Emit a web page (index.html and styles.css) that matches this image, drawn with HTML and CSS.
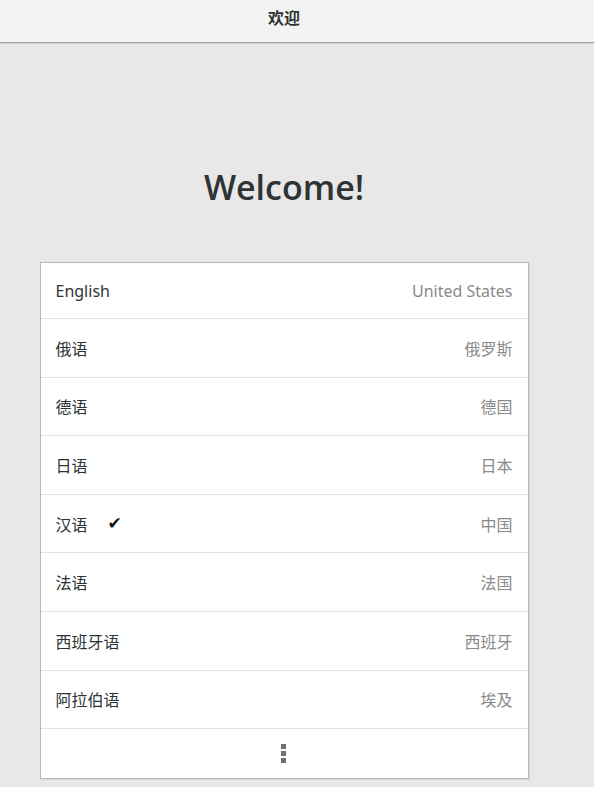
FILE: index.html
```html
<!DOCTYPE html>
<html lang="zh">
<head>
<meta charset="utf-8">
<link rel="stylesheet" href="styles.css">
</head>
<body>
<header class="titlebar"><span class="title">欢迎</span></header>
<main class="content">
  <h1 class="welcome">Welcome!</h1>
  <ul class="langs">
    <li class="row first"><span class="lang">English</span><span class="region">United States</span></li>
    <li class="row"><span class="lang">俄语</span><span class="region">俄罗斯</span></li>
    <li class="row"><span class="lang">德语</span><span class="region">德国</span></li>
    <li class="row"><span class="lang">日语</span><span class="region">日本</span></li>
    <li class="row"><span class="lang">汉语<span class="check">✔</span></span><span class="region">中国</span></li>
    <li class="row"><span class="lang">法语</span><span class="region">法国</span></li>
    <li class="row"><span class="lang">西班牙语</span><span class="region">西班牙</span></li>
    <li class="row"><span class="lang">阿拉伯语</span><span class="region">埃及</span></li>
    <li class="more"><svg width="6" height="20" viewBox="0 0 6 20"><rect x="0" y="0" width="5" height="5" fill="#707070"/><rect x="0" y="7" width="5" height="5" fill="#707070"/><rect x="0" y="14" width="5" height="5" fill="#707070"/></svg></li>
  </ul>
</main>
</body>
</html>
```
FILE: styles.css
```css
html, body { margin: 0; padding: 0; }
body {
  background: #e8e8e8;
  font-family: "Noto Sans", "Noto Sans CJK SC", sans-serif;
  color: #2e3436;
  width: 594px;
  height: 787px;
  overflow: hidden;
}
.titlebar {
  height: 43px;
  background: #f3f3f3;
  border-bottom: 1px solid #a3a3a3;
  box-shadow: 0 1px 0 #d6d6d6;
  display: flex;
  justify-content: center;
  align-items: center;
  box-sizing: border-box;
  padding-bottom: 8px;
  padding-right: 26px;
}
.title {
  font-family: "Noto Sans CJK SC", sans-serif;
  font-weight: 700;
  font-size: 16px;
  color: #2e3436;
}
.content {
  width: 568px;
  display: flex;
  flex-direction: column;
  align-items: center;
}
.welcome {
  margin: 121px 0 0 0;
  height: 98px;
  font-family: "Open Sans", sans-serif;
  font-weight: 600;
  font-size: 34px;
  line-height: 46px;
  color: #2e3436;
}
.langs {
  list-style: none;
  margin: 0;
  padding: 0;
  width: 487px;
  background: #fff;
  border: 1px solid #b8b8b8;
  box-shadow: 1px 1px 0 #d8d8d8;
}
.row {
  display: flex;
  justify-content: space-between;
  align-items: center;
  height: 57.6px;
  padding: 0 15px;
  border-top: 1px solid #e4e4e4;
  font-size: 16px;
}
.row.first { border-top: none; height: 55px; }
.lang {
  font-family: "Noto Sans", "Noto Sans CJK SC", sans-serif;
  color: #2e3436;
  display: flex;
  align-items: center;
}
.region {
  font-family: "Noto Sans", "Noto Sans CJK SC", sans-serif;
  color: #8a8a8a;
}
.check {
  margin-left: 20px;
  font-family: "DejaVu Sans", sans-serif;
  font-size: 17px;
  line-height: 1;
  color: #111;
}
.more {
  height: 49px;
  border-top: 1px solid #e4e4e4;
  display: flex;
  justify-content: center;
  align-items: center;
}
```
